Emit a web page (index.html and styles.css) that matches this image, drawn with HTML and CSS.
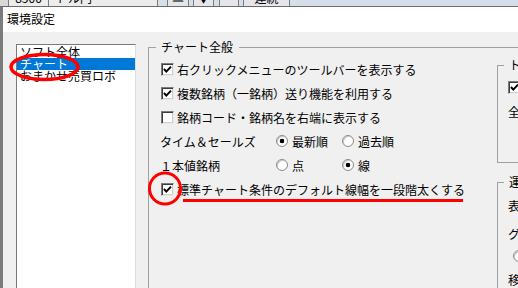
FILE: index.html
```html
<!DOCTYPE html>
<html lang="ja">
<head>
<meta charset="UTF-8" />
<meta name="viewport" content="width=device-width, initial-scale=1" />
<title>環境設定</title>
<link rel="stylesheet" href="styles.css">
</head>
<body>

<div class="toolbar">
  <span class="tb-cell tb-edge"></span>
  <span class="tb-cell tb-price"><span class="tb-text">8500</span></span>
  <span class="tb-cell tb-pair"><span class="tb-text">ドル円</span></span>
  <span class="tb-btn tb-up"><span class="tb-text">▲</span></span>
  <span class="tb-btn tb-down"><span class="tb-text">▼</span></span>
  <span class="tb-btn tb-eq"><span class="tb-text">＝</span></span>
  <span class="tb-btn tb-cont"><span class="tb-text">連続</span></span>
</div>

<div class="dialog">
  <div class="titlebar">環境設定</div>

  <div class="content">
    <ul class="listbox">
      <li>ソフト全体</li>
      <li class="selected">チャート</li>
      <li>おまかせ売買ロボ</li>
    </ul>

    <div class="group main-group">
      <div class="group-title">チャート全般</div>
      <div class="group-body">
        <div class="col-left">
          <div class="row"><span class="check on"><svg viewBox="0 0 11 11"><path d="M2 5 L4.3 7.6 L9 2.6" /></svg></span>右クリックメニューのツールバーを表示する</div>
          <div class="row"><span class="check on"><svg viewBox="0 0 11 11"><path d="M2 5 L4.3 7.6 L9 2.6" /></svg></span>複数銘柄（一銘柄）送り機能を利用する</div>
          <div class="row"><span class="check"></span>銘柄コード・銘柄名を右端に表示する</div>
          <div class="row">
            <span class="row-label">タイム＆セールズ</span>
            <span class="option"><span class="radio on"></span>最新順</span>
            <span class="option"><span class="radio"></span>過去順</span>
          </div>
          <div class="row">
            <span class="row-label">１本値銘柄</span>
            <span class="option"><span class="radio"></span>点</span>
            <span class="option"><span class="radio on"></span>線</span>
          </div>
          <div class="row"><span class="check on"><svg viewBox="0 0 11 11"><path d="M2 5 L4.3 7.6 L9 2.6" /></svg></span>標準チャート条件のデフォルト線幅を一段階太くする</div>
        </div>

        <div class="col-right">
          <div class="group sub-group">
            <div class="group-title">トレンドライン</div>
            <div class="sub-body">
              <div class="row"><span class="check on"><svg viewBox="0 0 11 11"><path d="M2 5 L4.3 7.6 L9 2.6" /></svg></span>表示する</div>
              <div class="row">全銘柄共通</div>
            </div>
          </div>
          <div class="group sub-group sub-group-2">
            <div class="group-title">運用</div>
            <div class="sub-body">
              <div class="row">表示本数</div>
              <div class="row row-gap">グラフ</div>
              <div class="row row-short"><span class="radio indent"></span>標準</div>
              <div class="row">移動平均</div>
            </div>
          </div>
        </div>
      </div>
    </div>
  </div>
</div>

<svg class="marks" width="518" height="288" viewBox="0 0 518 288">
  <ellipse cx="44.5" cy="67" rx="33.5" ry="12.5" />
  <circle cx="165" cy="188.5" r="15.5" />
  <line x1="183" y1="200.5" x2="463" y2="200.5" />
</svg>

</body>
</html>
```

FILE: styles.css
```css
html, body {
  margin: 0;
  padding: 0;
  overflow: hidden;
}
body {
  width: 518px;
  height: 288px;
  background: #f0f0f0;
  color: #000;
  font-family: "Noto Sans CJK JP", "Noto Sans", sans-serif;
  font-size: 12px;
  position: relative;
}

/* toolbar cut at the top */
.toolbar {
  display: flex;
  height: 6px;
  background: #d6dee9;
  border-bottom: 1px solid #6b6b6b;
  overflow: hidden;
}
.tb-cell, .tb-btn {
  height: 6px;
  overflow: hidden;
  flex: none;
  background: #ececec;
  text-align: center;
}
.tb-cell { border-right: 1px solid #7a7a7a; }
.tb-btn {
  border-left: 1px solid #7a7a7a;
  border-right: 1px solid #7a7a7a;
  background: #e4e6ea;
}
.tb-text {
  display: block;
  line-height: 14px;
  margin-top: -9px;
  white-space: nowrap;
}
.tb-edge { width: 8px; background: #d8d8d8; }
.tb-price { width: 39px; }
.tb-pair { width: 108px; text-align: left; }
.tb-pair .tb-text { padding-left: 7px; }
.tb-up { width: 20px; margin-left: 9px; color: #666; }
.tb-down { width: 19px; margin-left: 4px; }
.tb-eq { width: 18px; margin-left: 5px; }
.tb-cont { width: 45px; margin-left: 4px; }

/* dialog */
.dialog {
  border-left: 3px solid #7b7b7b;
  height: 281px;
}
.titlebar {
  height: 25px;
  line-height: 23px;
  background: #fff;
  padding-left: 4px;
}
.content {
  display: flex;
  padding: 12px 0 0 13px;
}

.listbox {
  flex: none;
  width: 120px;
  height: 300px;
  box-sizing: border-box;
  margin: 0;
  padding: 1px 0 0;
  list-style: none;
  background: #fff;
  border: 1px solid;
  border-color: #7a7a7a #dcdcdc #dcdcdc #7a7a7a;
}
.listbox li {
  height: 12px;
  line-height: 12px;
  padding-left: 3px;
  white-space: nowrap;
}
.listbox li.selected {
  background: #0078d7;
  color: #fff;
}

/* group boxes */
.group {
  border: 1px solid #a0a0a0;
  border-right: none;
  box-sizing: border-box;
}
.group-title {
  width: max-content;
  margin: -8px 0 0 7px;
  padding: 0 6px 0 5px;
  line-height: 14px;
  background: #f0f0f0;
}
.main-group {
  flex: none;
  width: 420px;
  height: 300px;
  margin: 3px 0 0 12px;
  border-bottom: none;
}
.group-body { display: flex; }
.col-left {
  flex: none;
  width: 348px;
  box-sizing: border-box;
  padding: 3px 0 0 12px;
}
.col-right { flex: 1; }

.row {
  display: flex;
  align-items: center;
  height: 24px;
  white-space: nowrap;
}
.row-label {
  flex: none;
  width: 115px;
  margin-left: -1px;
  padding-right: 1px;
}
.option {
  flex: none;
  display: flex;
  align-items: center;
  width: 66px;
}

.check {
  flex: none;
  width: 13px;
  height: 13px;
  box-sizing: border-box;
  margin-right: 3px;
  background: #fff;
  border: 1px solid;
  border-color: #7c7c7c #e8e8e8 #e8e8e8 #7c7c7c;
  box-shadow: inset 1px 1px 0 #3c3c3c, inset -1px -1px 0 #d4d0c8;
  display: flex;
}
.check svg {
  width: 11px;
  height: 11px;
}
.check path {
  fill: none;
  stroke: #000;
  stroke-width: 2;
}
.radio {
  flex: none;
  width: 12px;
  height: 12px;
  box-sizing: border-box;
  margin-right: 4px;
  border-radius: 50%;
  border: 1px solid #8a8a8a;
  background: #fff;
  box-shadow: inset 1px 1px 0 #c8c8c8;
}
.radio.on {
  background: radial-gradient(circle, #000 0 2px, #fff 2.6px);
}
.radio.indent { margin-left: 5px; }

.sub-group {
  height: 98px;
  margin-top: 11px;
}
.sub-group .group-title {
  margin-left: 6px;
  padding: 0 5px;
}
.sub-body { padding: 3px 0 0 10px; }
.sub-group-2 {
  height: 200px;
  margin-top: 19px;
}
.sub-group-2 .sub-body { padding-top: 4px; }
.row-gap { margin-top: 4px; }
.row-short { height: 22px; }

/* red annotation marks */
.marks {
  position: absolute;
  top: 0;
  left: 0;
  pointer-events: none;
}
.marks ellipse, .marks circle, .marks line {
  fill: none;
  stroke: #ff0000;
  stroke-width: 3;
}
.marks ellipse { stroke-width: 3.5; }
```
